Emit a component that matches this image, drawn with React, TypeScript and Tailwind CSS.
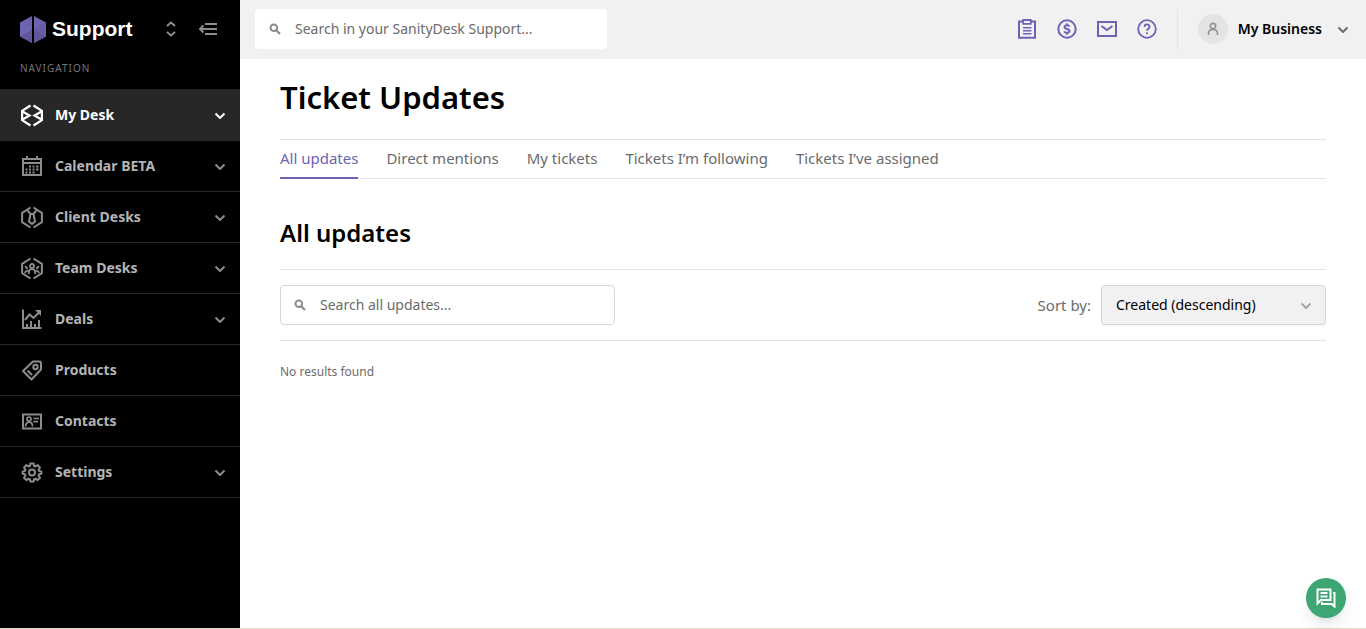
import type { ReactNode } from "react";

const stroke = {
  fill: "none",
  stroke: "currentColor",
  strokeWidth: 2,
  className: "size-6 shrink-0",
  viewBox: "0 0 24 24",
  "aria-hidden": true,
} as const;

const hexSides = "M10.5 2.5 2.1 7.8v9.4l8.4 5.3M13.5 2.5l8.4 5.3v9.4l-8.4 5.3";

function MyDeskIcon() {
  return (
    <svg {...stroke} strokeWidth={2.2}>
      <path d={hexSides} />
      <path d="m2.5 8.5 7 4-7 4M21.5 8.5l-7 4 7 4" />
    </svg>
  );
}

function CalendarIcon() {
  return (
    <svg {...stroke}>
      <path d="M3 5h18v16H3zM3 9h18M7 2v3M17 2v3" />
      <path
        d="M5.500 18.5h2M9 18.5h2M12.5 18.5h2M5.5 15.5h2M9 15.5h2M12.5 15.5h2M16 15.5h2.5M9 12.5h2M12.5 12.5h2M16 12.5h2.5"
        strokeWidth={2.2}
      />
    </svg>
  );
}

function ClientDesksIcon() {
  return (
    <svg {...stroke}>
      <path d={hexSides} />
      <path d="m7.5 5.5 3 3.500h3l3-3.500M10.5 9 9 16.500l3 2.500 3-2.500L13.5 9" />
    </svg>
  );
}

function TeamDesksIcon() {
  return (
    <svg {...stroke}>
      <path d={hexSides} />
      <g strokeWidth={1.8}>
        <circle cx="12" cy="10" r="2" />
        <path d="M8.8 18v-1.5c0-2 1.4-3.3 3.2-3.3s3.2 1.3 3.2 3.3V18" />
        <path d="M5 11c1.8-.4 2.6.9 1.5 2.3M5 17c.2-1.5 1.2-2.2 3-2.2M19 11c-1.8-.4-2.6.9-1.5 2.3M19 17c-.2-1.5-1.2-2.2-3-2.2" />
      </g>
    </svg>
  );
}

function DealsIcon() {
  return (
    <svg {...stroke}>
      <path d="M3 2.5V21h18.5M7 20v-3M11 20v-6M15 20v-3M19 20v-7" />
      <path d="M5 13l4.500-5.500 4 3.500L19.5 5" />
      <path d="M15 3h6v6z" fill="currentColor" stroke="none" />
    </svg>
  );
}

function ProductsIcon() {
  return (
    <svg {...stroke}>
      <path d="M13 3.5h7l1 1v7l-9.5 10L3 13z" strokeLinejoin="round" />
      <circle cx="15.5" cy="9" r="2.2" />
      <path d="m7.5 12.5 4.5 4.5" />
    </svg>
  );
}

function ContactsIcon() {
  return (
    <svg {...stroke}>
      <path d="M3 5.5h18v14H3z" />
      <circle cx="9" cy="10" r="2" strokeWidth={1.7} />
      <path d="M5.500 17.5c0-2.600 1.500-4.300 3.500-4.300s3.500 1.700 3.500 4.300M13.500 9.500H19M13.500 12.700H18" strokeWidth={1.7} />
    </svg>
  );
}

function SettingsIcon() {
  return (
    <svg {...stroke}>
      <circle cx="12" cy="12.5" r="3" />
      <path
        strokeLinejoin="round"
        d="M10.300 3.500h3.400l.5 2.500 1.300.5 2.100-1.400L20 7.500l-1.400 2.100.5 1.300 2.300.5v2.400l-2.300.5-.5 1.300 1.400 2.100-2.400 2.400-2.100-1.400-1.300.5-.5 2.300h-3.400l-.5-2.300-1.300-.5-2.100 1.400L4 17.700l1.400-2.100-.5-1.300-2.300-.5v-2.400l2.300-.5.5-1.300L4 7.500l2.400-2.400 2.100 1.400 1.300-.5z"
      />
    </svg>
  );
}

function Chevron({ className }: { className: string }) {
  return (
    <svg viewBox="0 0 12 8" fill="none" stroke="currentColor" strokeWidth={2} className={className} aria-hidden="true">
      <path d="M1.500 2.500 6 7l4.500-4.500" />
    </svg>
  );
}

function SearchIcon() {
  return (
    <svg viewBox="0 0 12 12" fill="none" stroke="currentColor" strokeWidth={2} className="size-3 text-[#8c8c8c]" aria-hidden="true">
      <circle cx="4.8" cy="4.8" r="3.3" />
      <path d="m7.2 7.2 3.8 3.8" strokeWidth={2.3} />
    </svg>
  );
}

const navItems: { label: string; icon: ReactNode; expandable: boolean; active?: boolean }[] = [
  { label: "My Desk", icon: <MyDeskIcon />, expandable: true, active: true },
  { label: "Calendar BETA", icon: <CalendarIcon />, expandable: true },
  { label: "Client Desks", icon: <ClientDesksIcon />, expandable: true },
  { label: "Team Desks", icon: <TeamDesksIcon />, expandable: true },
  { label: "Deals", icon: <DealsIcon />, expandable: true },
  { label: "Products", icon: <ProductsIcon />, expandable: false },
  { label: "Contacts", icon: <ContactsIcon />, expandable: false },
  { label: "Settings", icon: <SettingsIcon />, expandable: true },
];

const tabs = ["All updates", "Direct mentions", "My tickets", "Tickets I’m following", "Tickets I’ve assigned"];

function Sidebar() {
  return (
    <aside className="w-60 shrink-0 bg-black">
      <div className="flex h-[58px] items-center pl-5 pr-[22px]">
        <svg viewBox="0 0 26 27" className="h-[27px] w-[26px]" aria-hidden="true">
          <path d="M12 0v27L0 20.5v-14z" fill="#6c63ac" />
          <path d="M12 13.5V27L0 20.5z" fill="#5f5799" />
          <path d="m0 6.500 12 7-12 7z" fill="#6f66b3" />
          <path d="M14 0v27l12-6.5v-14z" fill="#6c63ac" />
          <path d="M14 13.5V27l12-6.5z" fill="#5f5799" />
          <path d="m26 6.500-12 7 12 7z" fill="#655ca4" />
        </svg>
        <span className="ml-1.5 font-['Liberation_Sans',sans-serif] text-[21px] font-bold text-white">Support</span>
        <button type="button" aria-label="Switch desk" className="ml-auto text-[#8c8c8c]">
          <svg viewBox="0 0 10 16" fill="none" stroke="currentColor" strokeWidth={2} className="h-4 w-2.5">
            <path d="m1 5 4-3.500L9 5M1 11l4 3.500L9 11" />
          </svg>
        </button>
        <button type="button" aria-label="Collapse menu" className="ml-[22px] text-[#8c8c8c]">
          <svg viewBox="0 0 20 14" fill="none" stroke="currentColor" strokeWidth={2} className="h-3.5 w-5">
            <path d="M7 2h12M2 7h17M7 12h12M5.500 3.500 2 7l3.500 3.500" />
          </svg>
        </button>
      </div>
      <p className="h-[31px] pl-5 pt-[3px] text-[10px] leading-[14px] tracking-widest text-[#757575]">NAVIGATION</p>
      <nav className="border-t border-[#272727]">
        {navItems.map((item) => (
          <a
            key={item.label}
            href="#"
            className={`flex h-[51px] items-center border-b border-[#272727] pl-5 pr-3.5 ${
              item.active ? "bg-[#272727] text-white" : "text-[#8c8c8c]"
            }`}
          >
            {item.icon}
            <span className={`ml-[11px] flex-1 text-sm font-bold ${item.active ? "" : "text-[#b4b4b4]"}`}>
              {item.label}
            </span>
            {item.expandable && <Chevron className="h-2 w-3" />}
          </a>
        ))}
      </nav>
    </aside>
  );
}

function Topbar() {
  return (
    <header className="flex h-[59px] items-center bg-[#f1f1f1] pb-0.5 pl-[15px] pr-[17px]">
      <label className="flex h-10 w-[352px] items-center rounded bg-white pl-3.5">
        <SearchIcon />
        <input
          type="search"
          aria-label="Search support"
          placeholder="Search in your SanityDesk Support..."
          className="ml-3.5 min-w-0 flex-1 text-sm outline-none placeholder:text-[#6b6b6b]"
        />
      </label>
      <div className="ml-auto flex items-center gap-4 text-[#6c63b5]">
        <button type="button" aria-label="Tasks">
          <svg {...stroke}>
            <path d="M4 4.500h16v16.300H4z" />
            <path d="M8.200 3h7.600v3.800H8.200z" fill="#f1f1f1" strokeWidth={1.8} />
            <path d="M8 10.700h8.500M8 13.700h8.500M8 16.700h8.500" strokeWidth={1.5} />
          </svg>
        </button>
        <button type="button" aria-label="Billing">
          <svg {...stroke}>
            <circle cx="12" cy="12" r="8.7" />
            <path d="M14.500 9.600c-.5-1-1.300-1.400-2.500-1.400-3.100 0-3.300 3.200-.3 3.700 3.800.6 3.600 3.900.3 3.900-1.400 0-2.300-.5-2.700-1.500M12 6.500V8M12 16v1.700" />
          </svg>
        </button>
        <button type="button" aria-label="Messages">
          <svg {...stroke}>
            <path d="M3 5h18v14H3zM6.500 9l5.500 4 5.500-4" />
          </svg>
        </button>
        <button type="button" aria-label="Help">
          <svg {...stroke} strokeWidth={1.8}>
            <circle cx="12" cy="12" r="8.8" />
            <path d="M9.500 9.900c.1-3.200 5-3.200 5-.2 0 2-2.500 2-2.500 4.100M12 15.300v1.900" />
          </svg>
        </button>
      </div>
      <button type="button" className="ml-[18px] flex h-10 items-center border-l border-[#e3e3e3] pl-5">
        <span className="flex size-[30px] items-center justify-center rounded-full bg-[#e4e4e4] text-[#949494]">
          <svg viewBox="0 0 12 14" fill="none" stroke="currentColor" strokeWidth={1.7} className="h-3.5 w-3">
            <circle cx="6" cy="4" r="2.7" />
            <path d="M1.500 13v-1.500C1.500 9 3.300 7.500 6 7.500s4.500 1.500 4.500 4V13" />
          </svg>
        </span>
        <span className="ml-2.5 text-sm font-semibold text-black">My Business</span>
        <Chevron className="ml-[15px] h-2 w-3 text-[#6b6b6b]" />
      </button>
    </header>
  );
}

export default function App() {
  return (
    <div className="flex min-h-screen border-b border-[#e5dcc5] bg-white font-['Noto_Sans',sans-serif] text-[#6b6b6b]">
      <Sidebar />
      <div className="min-w-0 flex-1">
        <Topbar />
        <main className="px-10">
          <h1 className="h-20 pt-[18px] text-[31px] leading-10 font-semibold text-black">Ticket Updates</h1>
          <nav className="flex h-10 gap-7 border-y border-[#e3e3e3] text-[15px]">
            {tabs.map((tab, i) => (
              <a
                key={tab}
                href="#"
                className={`-mb-px flex items-center border-b-2 ${
                  i === 0 ? "border-[#6c63b5] text-[#6c63b5]" : "border-transparent"
                }`}
              >
                {tab}
              </a>
            ))}
          </nav>
          <h2 className="mt-[38px] text-2xl leading-8 font-semibold text-black">All updates</h2>
          <div className="mt-5 flex items-center justify-between border-y border-[#e3e3e3] py-[15px]">
            <label className="flex h-10 w-[335px] items-center rounded border border-[#d6d6d6] pl-[13px]">
              <SearchIcon />
              <input
                type="search"
                aria-label="Search all updates"
                placeholder="Search all updates..."
                className="ml-3.5 min-w-0 flex-1 text-sm outline-none placeholder:text-[#6b6b6b]"
              />
            </label>
            <div className="flex items-center gap-2.5">
              <label htmlFor="sort" className="text-[15px]">
                Sort by:
              </label>
              <div className="relative">
                <select
                  id="sort"
                  className="h-10 w-[225px] appearance-none rounded border border-[#d6d6d6] bg-[#f1f1f1] pl-3.5 text-sm text-black shadow-xs"
                >
                  <option>Created (descending)</option>
                  <option>Created (ascending)</option>
                </select>
                <Chevron className="pointer-events-none absolute top-4 right-3.5 h-2 w-3 text-[#a6a6a6]" />
              </div>
            </div>
          </div>
          <p className="mt-[21px] text-xs leading-5">No results found</p>
        </main>
      </div>
      <button
        type="button"
        aria-label="Open chat"
        className="fixed right-5 bottom-[11px] flex size-10 items-center justify-center rounded-full bg-[#3da672] text-white shadow-lg"
      >
        <svg viewBox="0 0 20 20" fill="none" stroke="currentColor" strokeWidth={2} className="size-5">
          <path d="M1.500 1.500h13V12H5l-3.500 3.500zM4.500 5h7M4.500 8.500h7" />
          <path d="M17 5h1.500v13.500L15.500 16H6v-2" />
        </svg>
      </button>
    </div>
  );
}
